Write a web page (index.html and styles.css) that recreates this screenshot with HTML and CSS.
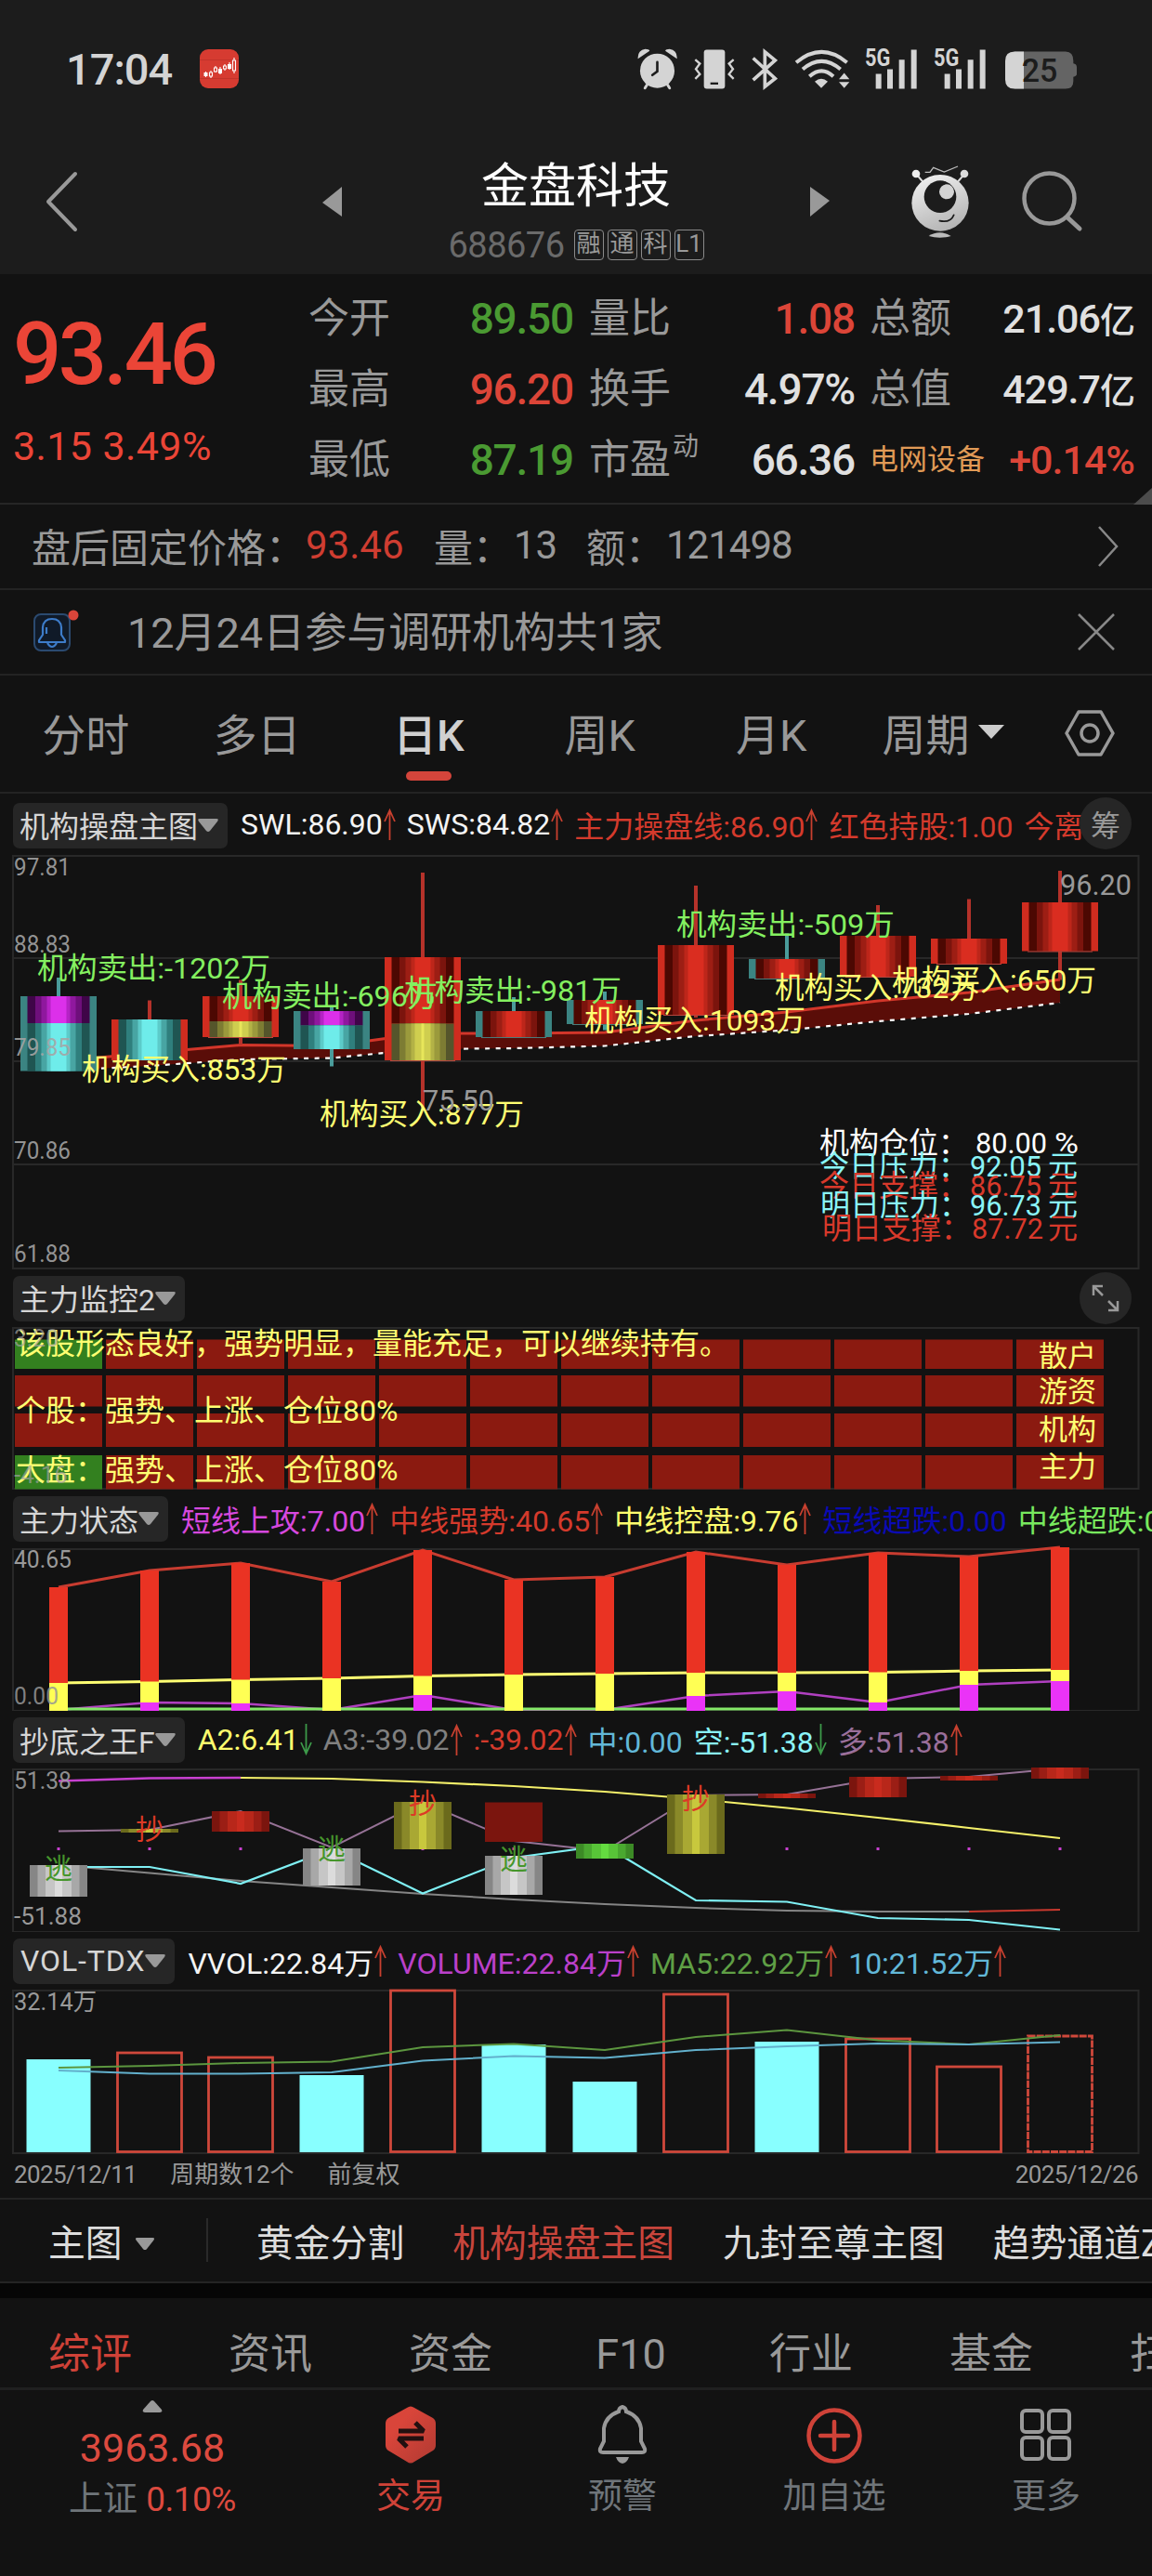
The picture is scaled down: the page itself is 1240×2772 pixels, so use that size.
FILE: index.html
```html
<!DOCTYPE html>
<html lang="zh-CN">
<head>
  <meta charset="UTF-8">
  <title>金盘科技 688676</title>
  <link rel="stylesheet" href="styles.css">
</head>
<body>
  <svg class="defs" width="0" height="0">
    <symbol id="up" viewBox="0 0 13 34"><path d="M6.5 34V2M1 14L6.5 2L12 14" fill="none" stroke="#c8402f" stroke-width="1.8"/></symbol>
    <symbol id="down" viewBox="0 0 13 34"><path d="M6.5 0V32M1 20L6.5 32L12 20" fill="none" stroke="#3d9a4a" stroke-width="1.8"/></symbol>
    <symbol id="caret" viewBox="0 0 22 15"><path d="M2 0H20Q23 0 21 3L13 13Q11 15 9 13L1 3Q-1 0 2 0Z" fill="#999"/></symbol>
  </svg>

  <header>
    <div class="status">
      <span class="clock">17:04</span>
      <svg class="app" width="42" height="42" viewBox="0 0 42 42">
        <rect width="42" height="42" rx="9" fill="#d63b31"/>
        <path d="M0 11.500H42M0 31.500H42" stroke="#b52f27" stroke-width=".6"/>
        <g fill="none" stroke="#fff" stroke-width="1.1">
          <path d="M6.500 24v6M12 23v8M17 18v7M22 19v8M27 16v7M32 14v8M37 9v17"/>
        </g>
        <g fill="#d63b31" stroke="#fff" stroke-width="1.1">
          <path d="M10.500 25h3v4h-3zM15.500 20h3v4h-3zM25.500 18h3v3h-3zM35.500 12h3v11h-3z"/>
        </g>
        <path d="M4.500 25h4v4h-4zM20 21h4v5h-4zM30 16h4v5h-4z" fill="#fff"/>
      </svg>
      <div class="icons">
        <svg width="43" height="45" viewBox="48 35 130 134">
          <circle cx="113" cy="107" r="56" fill="#d4d4d4"/>
          <path d="M50 68Q48 40 74 36Q86 36 88 42ZM177 68Q179 40 153 36Q141 36 139 42Z" fill="#d4d4d4"/>
          <path d="M80 152L73 163M146 152L153 163" stroke="#d4d4d4" stroke-width="9" stroke-linecap="round"/>
          <path d="M113 79V109L97 121" fill="none" stroke="#1c1c1c" stroke-width="8" stroke-linecap="round"/>
        </svg>
        <svg width="44" height="45" viewBox="239 35 132 134">
          <rect x="271" y="39" width="68" height="126" rx="9" fill="#d4d4d4"/>
          <path d="M292 148H317" stroke="#1c1c1c" stroke-width="7"/>
          <path d="M243 71L258 84L245 101L258 118L243 133M367 71L352 84L365 101L352 118L367 133" fill="none" stroke="#d4d4d4" stroke-width="7"/>
        </svg>
        <svg width="28" height="45" viewBox="426 35 84 134">
          <path d="M431 66L502 132L469 158V46L502 73L431 137" fill="none" stroke="#d4d4d4" stroke-width="11"/>
        </svg>
        <svg width="60" height="45" viewBox="565 35 180 134">
          <g fill="none" stroke="#d4d4d4" stroke-width="12">
            <path d="M571 80Q653 12 735 80M592 102Q653 50 714 102M614 125Q653 90 691 125"/>
          </g>
          <path d="M631 142Q652 124 673 142L652 163ZM709 134L726 114L743 134ZM709 143H743L726 163Z" fill="#d4d4d4"/>
        </svg>
        <svg class="sig" width="57" height="45" viewBox="793 35 171 134">
          <text x="793" y="91" textLength="82" lengthAdjust="spacingAndGlyphs">5G</text>
          <path d="M828 117h18v48h-18zM865 102h18v63h-18zM903 71h18v94h-18zM942 39h18v126h-18z" fill="#d4d4d4"/>
        </svg>
        <svg class="sig" width="57" height="45" viewBox="793 35 171 134">
          <text x="793" y="91" textLength="82" lengthAdjust="spacingAndGlyphs">5G</text>
          <path d="M828 117h18v48h-18zM865 102h18v63h-18zM903 71h18v94h-18zM942 39h18v126h-18z" fill="#d4d4d4"/>
        </svg>
        <svg class="bat" width="77" height="45" viewBox="1245 35 231 134">
          <path d="M1275 45H1440Q1465 45 1465 75V83Q1476 85 1476 95V118Q1476 124 1465 127V140Q1465 165 1440 165H1275Z" fill="#646464"/>
          <path d="M1305 45H1275Q1245 45 1245 75V135Q1245 165 1275 165H1305Z" fill="#d4d4d4"/>
          <text x="1298" y="141" textLength="116" lengthAdjust="spacingAndGlyphs">25</text>
        </svg>
      </div>
    </div>
    <div class="titlebar">
      <svg class="back" width="36" height="66" viewBox="0 0 36 66"><path d="M33 3L4 33L33 63" fill="none" stroke="#999" stroke-width="4" stroke-linecap="round" stroke-linejoin="round"/></svg>
      <svg class="prev" width="21" height="32" viewBox="0 0 21 32"><path d="M21 0V32L0 17Z" fill="#999"/></svg>
      <div class="name">
        <h1>金盘科技</h1>
        <p><span>688676</span><i>融</i><i>通</i><i>科</i><i>L1</i></p>
      </div>
      <svg class="next" width="21" height="32" viewBox="0 0 21 32"><path d="M0 0V32L21 15Z" fill="#999"/></svg>
      <svg class="robot" width="62" height="78" viewBox="937 412 186 234">
        <defs><linearGradient id="rb" x1=".2" y1="0" x2=".6" y2="1"><stop offset="0" stop-color="#f0f0f0"/><stop offset="1" stop-color="#b4b4b4"/></linearGradient></defs>
        <path d="M953 440L975 466M1108 440L1086 466" stroke="#ddd" stroke-width="6"/>
        <circle cx="952" cy="439" r="13" fill="#eee"/><circle cx="1108" cy="439" r="13" fill="#ddd"/>
        <path d="M981 434H997L1008 419L1043 433L1087 415" fill="none" stroke="#bbb" stroke-width="4"/>
        <ellipse cx="1030" cy="533" rx="92" ry="91" fill="url(#rb)"/>
        <circle cx="1030" cy="513" r="52" fill="#1c1c1c"/>
        <circle cx="1051" cy="497" r="24" fill="#d4d4d4"/>
        <path d="M1028 591Q1064 598 1074 572" fill="none" stroke="#1c1c1c" stroke-width="5" stroke-linecap="round"/>
        <path d="M993 640Q1028 618 1065 640Q1028 650 993 640Z" fill="#bbb"/>
      </svg>
      <svg class="search" width="66" height="66" viewBox="0 0 66 66"><circle cx="29.500" cy="29.500" r="27" fill="none" stroke="#999" stroke-width="4.500"/><path d="M49 50L62 62" stroke="#999" stroke-width="5" stroke-linecap="round"/></svg>
    </div>
  </header>

  <section class="quote">
    <div class="price">
      <b>93.46</b>
      <span>3.15 3.49%</span>
    </div>
    <dl class="c1">
      <dt>今开</dt><dd class="green">89.50</dd>
      <dt>最高</dt><dd class="red">96.20</dd>
      <dt>最低</dt><dd class="green">87.19</dd>
    </dl>
    <dl class="c2">
      <dt>量比</dt><dd class="red">1.08</dd>
      <dt>换手</dt><dd>4.97%</dd>
      <dt>市盈<sup>动</sup></dt><dd>66.36</dd>
    </dl>
    <dl class="c3">
      <dt>总额</dt><dd>21.06<em>亿</em></dd>
      <dt>总值</dt><dd>429.7<em>亿</em></dd>
      <dt class="sector">电网设备</dt><dd class="red">+0.14%</dd>
    </dl>
    <svg class="corner" width="20" height="18" viewBox="0 0 20 18"><path d="M20 0V18H0Z" fill="#4c4c4c"/></svg>
  </section>

  <section class="after">
    <span class="a1">盘后固定价格：</span><span class="a2">93.46</span>
    <span class="a3">量：</span><span class="a4">13</span>
    <span class="a5">额：</span><span class="a6">121498</span>
    <svg width="24" height="44" viewBox="0 0 24 44"><path d="M2 1L21 22L2 43" fill="none" stroke="#888" stroke-width="2.500"/></svg>
  </section>

  <section class="notice">
    <svg width="50" height="48" viewBox="0 0 50 48">
      <rect x="1" y="5" width="38" height="39" rx="7" fill="#101a28" stroke="#2b4a70" stroke-width="2"/>
      <path d="M10 27V19Q11 10 20 10Q29 10 30 19V27L34 33V35H6V33Z M15 36Q20 44 25 36M14 19V26" fill="none" stroke="#3d7cc9" stroke-width="2.200" stroke-linejoin="round"/>
      <circle cx="43" cy="6" r="5.500" fill="#d9453a"/>
    </svg>
    <span>12月24日参与调研机构共1家</span>
    <svg class="close" width="40" height="40" viewBox="0 0 40 40"><path d="M1 1L39 39M39 1L1 39" stroke="#888" stroke-width="2.500"/></svg>
  </section>

  <nav class="period">
    <a>分时</a><a>多日</a><a class="on">日K</a><a>周K</a><a>月K</a><a class="more">周期<svg width="28" height="15" viewBox="0 0 28 15"><path d="M0 0H28L14 15Z" fill="#ccc"/></svg></a>
    <svg class="hex" width="54" height="50" viewBox="0 0 54 50"><path d="M15 2H39L52 25L39 48H15L2 25Z" fill="none" stroke="#999" stroke-width="3.500" stroke-linejoin="round"/><circle cx="27" cy="25" r="9" fill="none" stroke="#999" stroke-width="3.500"/></svg>
  </nav>

  <section class="panel main">
    <div class="head">
      <div class="pill">机构操盘主图<svg><use href="#caret"/></svg></div>
      <div class="legend">
        <span class="white">SWL:86.90<svg><use href="#up"/></svg></span>
        <span class="white">SWS:84.82<svg><use href="#up"/></svg></span>
        <span class="lred">主力操盘线:86.90<svg><use href="#up"/></svg></span>
        <span class="lred">红色持股:1.00</span>
        <span class="lred">今离</span>
      </div>
      <div class="round">筹</div>
    </div>
    <svg id="kline" width="1240" height="446" viewBox="0 920 1240 446"></svg>
  </section>

  <section class="panel">
    <div class="head">
      <div class="pill">主力监控2<svg><use href="#caret"/></svg></div>
      <div class="round"><svg width="30" height="30" viewBox="0 0 30 30"><path d="M2 12V2H12M2 2L12 12M28 18V28H18M28 28L18 18" fill="none" stroke="#999" stroke-width="2.500"/></svg></div>
    </div>
    <svg id="monitor" width="1240" height="175" viewBox="0 1428 1240 175"></svg>
  </section>

  <section class="panel">
    <div class="head">
      <div class="pill">主力状态<svg><use href="#caret"/></svg></div>
      <div class="legend">
        <span class="magenta">短线上攻:7.00<svg><use href="#up"/></svg></span>
        <span class="lred">中线强势:40.65<svg><use href="#up"/></svg></span>
        <span class="yellow">中线控盘:9.76<svg><use href="#up"/></svg></span>
        <span class="blue">短线超跌:0.00</span>
        <span class="lime">中线超跌:0.00</span>
      </div>
    </div>
    <svg id="state" width="1240" height="175" viewBox="0 1666 1240 175"></svg>
  </section>

  <section class="panel">
    <div class="head">
      <div class="pill">抄底之王F<svg><use href="#caret"/></svg></div>
      <div class="legend">
        <span class="yellow">A2:6.41<svg><use href="#down"/></svg></span>
        <span class="gray">A3:-39.02<svg><use href="#up"/></svg></span>
        <span class="lred">:-39.02<svg><use href="#up"/></svg></span>
        <span class="sky">中:0.00</span>
        <span class="cyan">空:-51.38<svg><use href="#down"/></svg></span>
        <span class="mauve">多:51.38<svg><use href="#up"/></svg></span>
      </div>
    </div>
    <svg id="bottomking" width="1240" height="175" viewBox="0 1904 1240 175"></svg>
  </section>

  <section class="panel">
    <div class="head">
      <div class="pill latin">VOL-TDX<svg><use href="#caret"/></svg></div>
      <div class="legend">
        <span class="white">VVOL:22.84万<svg><use href="#up"/></svg></span>
        <span class="violet">VOLUME:22.84万<svg><use href="#up"/></svg></span>
        <span class="moss">MA5:22.92万<svg><use href="#up"/></svg></span>
        <span class="sky">10:21.52万<svg><use href="#up"/></svg></span>
      </div>
    </div>
    <svg id="volume" width="1240" height="175" viewBox="0 2142 1240 175"></svg>
    <div class="dates"><span class="day">2025/12/11</span><span>周期数12个</span><span>前复权</span><span class="day end">2025/12/26</span></div>
  </section>

  <nav class="charts">
    <a class="pick">主图<svg><use href="#caret"/></svg></a>
    <a>黄金分割</a><a class="on">机构操盘主图</a><a>九封至尊主图</a><a>趋势通道Z</a>
  </nav>

  <nav class="info">
    <a class="on">综评</a><a>资讯</a><a>资金</a><a>F10</a><a>行业</a><a>基金</a><a>扫雷</a>
  </nav>

  <footer>
    <div class="index">
      <svg width="22" height="13" viewBox="0 0 22 13"><path d="M9 1Q11 -1 13 1L21 10Q22 13 19 13H3Q0 13 1 10Z" fill="#999"/></svg>
      <b>3963.68</b>
      <p>上证 <span>0.10%</span></p>
    </div>
    <a class="on">
      <svg width="58" height="64" viewBox="0 0 58 64">
        <defs><linearGradient id="tr" x1="0" y1="0" x2="1" y2="1"><stop offset=".3" stop-color="#d9453a"/><stop offset="1" stop-color="#b03a32"/></linearGradient></defs>
        <path d="M25 3Q29 0 33 3L53 14Q56 16 56 20V43Q56 47 53 49L33 61Q29 64 25 61L5 49Q2 47 2 43V20Q2 16 5 14Z" fill="url(#tr)"/>
        <path d="M16 28H43L34 19M43 36H16L25 45" fill="none" stroke="#221010" stroke-width="5" stroke-linejoin="bevel"/>
      </svg>交易</a>
    <a>
      <svg width="58" height="64" viewBox="0 0 58 64">
        <path d="M29 2Q33 3 33 7Q47 12 49 25V39L53 47Q54 51 50 51H8Q4 51 5 47L9 39V25Q11 12 25 7Q25 3 29 2Z" fill="none" stroke="#999" stroke-width="4"/>
        <path d="M22 56H36Q34 62 29 63Q24 62 22 56Z" fill="#999"/>
      </svg>预警</a>
    <a>
      <svg class="plus" width="62" height="64" viewBox="0 0 62 64"><circle cx="31" cy="33" r="27.500" fill="none" stroke="#cf4238" stroke-width="4.500"/><path d="M31 18V48M16 33H46" stroke="#cf4238" stroke-width="4.500" stroke-linecap="round"/></svg>加自选</a>
    <a>
      <svg width="58" height="64" viewBox="0 0 58 64"><g fill="none" stroke="#999" stroke-width="4"><rect x="3" y="6" width="22" height="23" rx="4"/><rect x="32" y="6" width="22" height="23" rx="4"/><rect x="3" y="35" width="22" height="23" rx="4"/><rect x="32" y="35" width="22" height="23" rx="4"/></g></svg>更多</a>
  </footer>

  <script>
    const X = i => 63 + 98 * i;

    function el(svg, tag, attrs) {
      const e = document.createElementNS('http://www.w3.org/2000/svg', tag);
      for (const k in attrs) e.setAttribute(k, attrs[k]);
      svg.appendChild(e);
      return e;
    }
    function rect(svg, x1, y1, x2, y2, fill) {
      el(svg, 'rect', { x: x1, y: y1, width: x2 - x1, height: y2 - y1, fill });
    }
    function line(svg, ys, color, width, from = 0, extra = {}) {
      const points = ys.map((p, i) => Array.isArray(p) ? p.join() : X(from + i) + ',' + p).join(' ');
      el(svg, 'polyline', { points, fill: 'none', stroke: color, 'stroke-width': width, ...extra });
    }
    // cy is the middle of the glyphs, w squeezes the text to a width
    function text(svg, x, cy, str, size, color, w) {
      const a = { x, y: cy + size * 0.36, 'font-size': size, fill: color };
      if (w) { a.textLength = w; a.lengthAdjust = 'spacingAndGlyphs'; }
      el(svg, 'text', a).textContent = str;
    }
    // stepped shading, outermost colour first
    function shade(svg, cx, y1, y2, halves, colors) {
      halves.forEach((h, i) => rect(svg, cx - h, y1, cx + h, y2, colors[i]));
    }
    function frame(svg, top, bottom, rows = []) {
      el(svg, 'rect', { x: 14, y: top, width: 1211.5, height: bottom - top, fill: 'none', stroke: '#282828', 'stroke-width': 2 });
      rows.forEach(y => rect(svg, 14, y - 1, 1225, y + 1, '#282828'));
    }

    // ---- k line ----
    const k = document.getElementById('kline');
    frame(k, 921, 1365, [1031, 1142, 1253]);
    const upper = [[63, 1142], [161, 1133], [259, 1124.5], [357, 1125.5], [455, 1112], [553, 1112], [651, 1111], [749, 1098], [847, 1089], [945, 1077], [1043, 1068], [1141, 1054]];
    const lower = [[63, 1152], [161, 1147], [259, 1140], [357, 1138.5], [455, 1129], [553, 1128], [651, 1125.5], [749, 1115], [847, 1108.5], [945, 1099], [1043, 1091], [1141, 1079]];
    el(k, 'polygon', { points: upper.concat([...lower].reverse()).join(' '), fill: '#5a0d08' });
    line(k, upper, '#d2362a', 3);
    line(k, lower, '#fff', 2.2, 0, { 'stroke-dasharray': '5 6.500' });

    const R = ['#4c0802', '#7b140d', '#9d1e14', '#bd261a', '#da2d20'];
    const Y = ['#55552b', '#7d7c33', '#9b9a3c', '#b3b246', '#cfce4f'];
    const C = ['#1f5552', '#2f7f7d', '#48a5a3', '#5ccbc9', '#6eecea'];
    const M = ['#3f0548', '#6e0f7b', '#8f189e', '#b523c5', '#dc30ea'];
    // side colour, wick top, wick bottom, [fill, y1, y2]...
    const T = '#3b8482', D = '#d02c1f';
    const candles = [
      [T, 1052, 1152, [M, 1072, 1101], [C, 1101, 1152.5]],
      [D, 1076.5, 1146, [C, 1097, 1141]],
      [D, 1054.5, 1124, [R, 1072, 1099], [Y, 1099, 1116]],
      [T, 1082.5, 1147.5, [M, 1088, 1103.5], [C, 1103.5, 1129]],
      [D, 939, 1192, [R, 1030, 1101.5], [Y, 1101.5, 1141]],
      [T, 1073, 1116, [R, 1088, 1116]],
      [T, 1067, 1108.5, [R, 1076, 1102]],
      [D, 953, 1095, [R, 1017, 1092]],
      [T, 1004.5, 1054, [R, 1032, 1053]],
      [D, 974, 1051, [R, 1007, 1051]],
      [D, 967.5, 1038, [R, 1010, 1037]],
      [D, 937, 1054.5, [R, 971, 1023.5]]
    ];
    candles.forEach(([side, w1, w2, ...parts], i) => {
      const x = X(i), top = parts[0][1], bottom = parts[parts.length - 1][2];
      rect(k, x - 2, w1, x + 2, w2, side === T ? '#4a9c9b' : '#b5322a');
      rect(k, x - 41, top, x + 41, bottom, side);
      parts.forEach(([c, y1, y2]) => {
        shade(k, x, y1, y2, [33.5, 25, 18.5, 12.5, 8.5], c);
        if (c === Y) rect(k, x - 1.5, y1, x + 1.5, y2, '#e8e65a');
      });
      if (parts[parts.length - 1][0] !== C) rect(k, x - 35, bottom, x + 35, bottom + 1, side === T ? '#4a7c7b' : '#b5463e');
    });

    [['97.81', 933], ['88.83', 1016], ['79.85', 1127], ['70.86', 1238], ['61.88', 1349]]
      .forEach(([s, y]) => text(k, 15, y, s, 26, 'rgba(165,165,165,.9)', 61));
    const green = '#84f060', yel = '#ffff72';
    text(k, 40, 1041, '机构卖出:-1202万', 32, green, 251);
    text(k, 239, 1071.5, '机构卖出:-696万', 32, green, 232);
    text(k, 435, 1065, '机构卖出:-981万', 32, green, 234);
    text(k, 728, 994, '机构卖出:-509万', 32, green, 235);
    text(k, 88, 1150, '机构买入:853万', 32, yel, 220);
    text(k, 344, 1198, '机构买入:877万', 32, yel, 220);
    text(k, 629, 1097, '机构买入:1093万', 32, yel, 238);
    text(k, 834, 1062, '机构买入:732万', 32, yel, 219);
    text(k, 960, 1054.5, '机构买入:650万', 32, yel, 220);
    text(k, 455, 1183, '75.50', 32, '#999', 77);
    text(k, 1141, 951.5, '96.20', 32, '#999', 77);
    [['机构仓位', '80.00', '%', 1229.5, '#fff', 882, 1050],
     ['今日压力', '92.05', '元', 1254.5, '#8af4f8', 882, 1044],
     ['今日支撑', '86.75', '元', 1275, '#d8392b', 882, 1044],
     ['明日压力', '96.73', '元', 1296.5, '#8af4f8', 883, 1044],
     ['明日支撑', '87.72', '元', 1321.5, '#d8392b', 885, 1046]
    ].forEach(([label, v, unit, y, c, x1, x2]) => {
      text(k, x1, y, label + '：', 32, c);
      text(k, x2, y, v, 32, c, 77);
      text(k, unit === '%' ? 1135 : 1128, y, unit, 32, c, unit === '%' ? 26 : 32);
    });

    // ---- monitor ----
    const m = document.getElementById('monitor');
    frame(m, 1429, 1602);
    [[1441.5, 1473, true], [1480, 1513.5], [1521, 1557], [1566, 1602.5, true]].forEach(([y1, y2, g]) => {
      for (let i = 0; i < 12; i++) rect(m, X(i) - 47, y1, X(i) + 47, y2, g && i === 0 ? '#33801f' : '#8b1a10');
    });
    text(m, 17, 1445.5, '该股形态良好，强势明显，量能充足，可以继续持有。', 32, yel);
    text(m, 17, 1517, '个股：强势、上涨、仓位80%', 32, yel);
    text(m, 17, 1581, '大盘：强势、上涨、仓位80%', 32, yel);
    text(m, 15, 1440, '3.20', 26, 'rgba(160,160,160,.7)', 48);
    text(m, 15, 1587, '-4.16', 26, 'rgba(160,160,160,.7)', 58);
    [['散户', 1459], ['游资', 1497], ['机构', 1538], ['主力', 1578]].forEach(([s, y]) => text(m, 1118, y, s, 31, yel));

    // ---- state ----
    const s = document.getElementById('state');
    frame(s, 1667, 1841);
    const red = [1708, 1690, 1682, 1702, 1668, 1700, 1697, 1670, 1684, 1671, 1675, 1665];
    const mid = [1811, 1809.5, 1807.5, 1806, 1803.5, 1802, 1801, 1800, 1800, 1799.5, 1798, 1797];
    const mag = [1840, 1832, 1833, 1840, 1824, 1840, 1840, 1825, 1820, 1832, 1813, 1809];
    line(s, red, '#c83c30', 3);
    line(s, mid, '#ffff72', 3);
    line(s, mag, '#b040c0', 2.5);
    line(s, Array(12).fill(1839), '#84e868', 3);
    for (let i = 0; i < 12; i++) {
      rect(s, X(i) - 10, red[i], X(i) + 10, 1841, '#ea3323');
      rect(s, X(i) - 10, mid[i], X(i) + 10, 1841, '#ffff54');
      if (mag[i] < 1840) rect(s, X(i) - 10, mag[i], X(i) + 10, 1841, '#ea33f7');
    }
    text(s, 15, 1678, '40.65', 26, '#999', 62);
    text(s, 15, 1825, '0.00', 26, 'rgba(150,150,150,.85)', 48);

    // ---- bottom king ----
    const b = document.getElementById('bottomking');
    frame(b, 1904, 2079);
    line(b, [2007, 2015.5, 2024, 2031, 2038, 2044, 2049, 2053, 2056, 2057, 2057], '#858585', 2);
    line(b, [2057, 2055], '#c8392e', 2.2, 10);
    line(b, [1916.5, 1913.5, 1913], '#c840d0', 2.4);
    line(b, [1913, 1914, 1917.5, 1922, 1928, 1936, 1945.5, 1956, 1967, 1978], '#f4f06a', 2.2, 2);
    line(b, [1970.5, 1969, 1949, 1988, 1939, 1981, 1992, 1932, 1931, 1914, 1912, 1903], '#967296', 2);
    line(b, [2009, 2009, 2027, 1990, 2037.5, 1999, 1986, 2045, 2046.5, 2064, 2066, 2076.5], '#7ff0f4', 2.2);
    for (let i = 0; i < 12; i++) rect(b, X(i) - 1.5, 1988, X(i) + 1.5, 1991, '#c840d0');
    const W = ['#868686', '#a8a8a8', '#c6c6c6', '#dcdcdc'];
    const Y2 = ['#6b6a1c', '#8a8929', '#a9a833', '#c8c83d'];
    const R2 = ['#7b150e', '#9b1e15', '#b8271a', '#c92b1e'];
    const G2 = ['#3c8a26', '#4aa830', '#58c438', '#64dc40'];
    [[0, W, 2007, 2041], [1, Y2, 1968, 1972], [2, R2, 1949, 1971], [3, W, 1989, 2029], [4, Y2, 1939, 1990],
     [5, W, 1997, 2039], [6, G2, 1984, 2000], [7, Y2, 1931, 1995], [8, R2, 1930, 1935], [9, R2, 1912, 1934],
     [10, R2, 1911, 1916], [11, R2, 1902, 1914]
    ].forEach(([i, c, y1, y2]) => shade(b, X(i), y1, y2, [31, 22.5, 14, 4], c));
    rect(b, X(5) - 31, 1939.5, X(5) + 31, 1982, '#7b150e');
    [[1, 1968], [4, 1940], [7, 1935]].forEach(([i, y]) => text(b, X(i) - 15, y, '抄', 30, '#dc3a26'));
    [[0, 2010], [3, 1989.5], [5, 2000.5]].forEach(([i, y]) => text(b, X(i) - 15, y, '逃', 30, '#46962c'));
    text(b, 15, 1916, '51.38', 26, 'rgba(160,160,160,.9)', 62);
    text(b, 15, 2062, '-51.88', 26, '#999', 73);

    // ---- volume ----
    const v = document.getElementById('volume');
    frame(v, 2142, 2317);
    [2216, 2209, 2214, 2233, 2142, 2200, 2240, 2146, 2197, 2194, 2224, 2191].forEach((y, i) => {
      if ([0, 3, 5, 6, 8].includes(i)) rect(v, X(i) - 34.5, y, X(i) + 34.5, 2316, '#88ffff');
      else {
        const a = { x: X(i) - 34.5, y, width: 69, height: 2315.5 - y, fill: 'none', stroke: '#cf483b', 'stroke-width': 2.8 };
        if (i === 11) a['stroke-dasharray'] = '8 1.200';
        el(v, 'rect', a);
      }
    });
    line(v, [2225, 2223, 2220, 2218.5, 2203, 2199.5, 2206, 2192, 2184.5, 2195.5, 2200, 2190], '#5c963f', 2);
    line(v, [2228, 2231.5, 2231.5, 2230, 2217.5, 2212.5, 2214.5, 2206, 2202, 2199, 2200, 2197.5], '#62b0cc', 2);
    text(v, 15, 2154, '32.14万', 26, '#999', 89);
  </script>
</body>
</html>
```
FILE: styles.css
```css
* {
  box-sizing: border-box;
}
body {
  margin: 0;
  width: 1240px;
  height: 2772px;
  overflow: hidden;
  background-color: #121212;
  color: #999;
  font-family: Roboto, "Noto Sans CJK SC", sans-serif;
  font-size: 32px;
  font-weight: 400;
}
svg {
  display: block;
  flex: none;
}
h1, p, dl, dd, dt {
  margin: 0;
  font-weight: 400;
}
i, em {
  font-style: normal;
}
.defs {
  display: none;
}

/* top */
header {
  height: 295px;
  background-color: #1c1c1c;
}
.status {
  display: flex;
  align-items: center;
  height: 148px;
  padding-left: 71px;
}
.clock {
  width: 144px;
  color: #d4d4d4;
  font-size: 47px;
  font-weight: 500;
  letter-spacing: -1px;
}
.icons {
  display: flex;
  align-items: center;
  margin-left: 429px;
}
.icons svg {
  margin-right: 18px;
}
.icons svg.sig {
  margin: 0 17px 0 -2px;
}
.icons svg.sig + svg.sig {
  margin: 0 20px 0 0;
}
.sig text {
  fill: #d4d4d4;
  font-size: 76px;
  font-weight: 700;
}
.bat text {
  fill: #1c1c1c;
  font-size: 106px;
  font-weight: 500;
}
.titlebar {
  display: flex;
  align-items: center;
  height: 138px;
  padding-left: 48px;
}
.prev {
  margin-left: 263px;
}
.name {
  width: 504px;
  text-align: center;
  padding-top: 24px;
}
.name h1 {
  color: #fff;
  font-size: 51px;
  line-height: 60px;
}
.name p {
  display: flex;
  justify-content: center;
  align-items: center;
  gap: 4px;
  margin-top: 9px;
  line-height: 48px;
}
.name p span {
  color: #6a6a6a;
  font-size: 38px;
  letter-spacing: -0.5px;
  margin-right: 6px;
}
.name i {
  width: 32px;
  height: 33px;
  border: 1.5px solid #8a8a8a;
  border-radius: 4px;
  font-size: 26px;
  line-height: 29px;
}
.robot {
  margin-left: 88px;
}
.search {
  margin-left: 57px;
}

/* quote */
.quote {
  position: relative;
  display: flex;
  height: 248px;
  border-bottom: 2px solid #262626;
}
.quote .green {
  color: #4a9a32;
}
.quote .red {
  color: #dc4538;
}
.price {
  width: 332px;
  padding-left: 14px;
  color: #eb4537;
}
.price b {
  display: block;
  margin-top: 32px;
  font-size: 92px;
  font-weight: 500;
  line-height: 110px;
  letter-spacing: -3.5px;
}
.price span {
  display: block;
  margin-top: 19px;
  font-size: 43px;
  line-height: 48px;
  letter-spacing: 0.4px;
}
dl {
  display: grid;
  grid-template-columns: auto 1fr;
  grid-auto-rows: 76px;
  line-height: 76px;
  padding-top: 10px;
}
dt {
  font-size: 44px;
}
dd {
  color: #e0e0e0;
  font-size: 46px;
  font-weight: 500;
  letter-spacing: -1.2px;
  text-align: right;
}
.c1 {
  width: 285px;
}
.c2 {
  width: 286px;
  margin-left: 17px;
}
.c3 {
  width: 285px;
  margin-left: 16px;
}
.c3 dd {
  font-size: 43px;
  letter-spacing: -1px;
  grid-column: 2;
}
.c3 dt {
  grid-column: 1;
  width: 130px;
}
.c3 em {
  font-size: 38px;
}
sup {
  display: inline-block;
  font-size: 28px;
  line-height: 28px;
  vertical-align: 20px;
  margin-left: 2px;
}
.c3 .sector {
  color: #e09a56;
  font-size: 31px;
  white-space: nowrap;
}
.corner {
  position: absolute;
  right: 0;
  bottom: -2px;
}

/* after-hours line and notice */
.after, .notice {
  display: flex;
  align-items: center;
  height: 92px;
  border-bottom: 2px solid #232323;
}
.after {
  padding: 0 35px 0 34px;
  font-size: 42px;
}
.after span {
  flex: none;
  white-space: nowrap;
  margin-top: -3px;
}
.a1 {
  width: 295px;
}
.a2 {
  width: 138px;
  color: #cf3d31;
}
.a3, .a5 {
  width: 86px;
}
.a4 {
  width: 78px;
}
.after .a6 {
  letter-spacing: -1px;
}
.after svg {
  margin-left: auto;
}
.notice {
  padding: 0 40px 0 36px;
  font-size: 45px;
}
.notice span {
  margin: -5px 0 0 51px;
}
.close {
  margin-left: auto;
}

/* period tabs */
.period {
  display: flex;
  align-items: center;
  height: 127px;
  padding-bottom: 2px;
  border-bottom: 2px solid #232323;
  font-size: 47px;
}
.period a {
  position: relative;
  width: 184.5px;
  margin-top: -2px;
  text-align: center;
}
.period .on {
  color: #d0d0d0;
  font-weight: 500;
}
.period .on::after {
  content: "";
  position: absolute;
  left: 68px;
  bottom: -18px;
  width: 49px;
  height: 10px;
  border-radius: 5px;
  background-color: #d4453b;
}
.period .more {
  display: flex;
  align-items: center;
  gap: 9px;
  width: 223.5px;
  padding-left: 27px;
}

/* indicator panels */
.panel {
  overflow: hidden;
}
.panel > svg {
  overflow: visible;
}
.head {
  display: flex;
  align-items: center;
  height: 63px;
  padding-left: 14px;
  position: relative;
}
.main .head {
  height: 66px;
  margin-top: 1px;
  margin-bottom: -1px;
}
.main + .panel .head {
  height: 62px;
}
.pill {
  display: flex;
  align-items: center;
  flex: none;
  height: 49px;
  padding: 0 10px 2px 7px;
  border-radius: 7px;
  background-color: #262626;
  color: #d6d6d6;
}
.pill svg {
  width: 22px;
  height: 15px;
  margin: 2px 0 0;
}
.pill.latin {
  padding-left: 8px;
  letter-spacing: 0.9px;
}
.legend {
  display: flex;
  gap: 12px;
  margin: -2px 0 0 14px;
  white-space: nowrap;
}
.legend span {
  display: flex;
  align-items: center;
}
.legend svg {
  width: 13px;
  height: 34px;
  margin-left: 1px;
}
.round {
  position: absolute;
  right: 22px;
  top: 3px;
  display: flex;
  align-items: center;
  justify-content: center;
  width: 56px;
  height: 56px;
  border-radius: 50%;
  background-color: #262626;
}
.white { color: #f4f4f4; }
.lred { color: #d43a2c; }
.magenta { color: #d648de; }
.yellow { color: #ffff6e; }
.blue { color: #0a0ab4; }
.lime { color: #78e85e; }
.gray { color: #808080; }
.sky { color: #62b8d8; }
.cyan { color: #8af4f8; }
.mauve { color: #9a6f9a; }
.violet { color: #bb40ca; }
.moss { color: #5f9f45; }
.dates {
  display: flex;
  height: 48px;
  padding: 0 15px;
  font-size: 26px;
  line-height: 46px;
}
.dates span {
  margin-right: 36px;
}
.dates .day {
  letter-spacing: -0.6px;
}
.dates .end {
  margin: 0 0 0 auto;
}

/* chart picker */
.charts {
  display: flex;
  align-items: center;
  gap: 52px;
  height: 92px;
  padding-bottom: 1px;
  border-top: 2px solid #242424;
  border-bottom: 2px solid #242424;
  color: #dcdcdc;
  font-size: 39.8px;
  white-space: nowrap;
  overflow: hidden;
}
.charts .on {
  color: #c8453c;
}
.charts .pick {
  display: flex;
  align-items: center;
  flex: none;
  width: 224px;
  height: 47px;
  padding-left: 52px;
  border-right: 2px solid #2a2a2a;
}
.pick svg {
  width: 24px;
  height: 14px;
  margin: 8px 0 0 12px;
}
.info {
  display: flex;
  height: 115px;
  border-top: 16px solid #060606;
  border-bottom: 3px solid #1f1f1f;
  font-size: 45px;
  line-height: 122px;
  overflow: hidden;
}
.info a {
  flex: none;
  width: 194px;
  text-align: center;
}
.info .on {
  color: #cf4238;
}

/* bottom bar */
footer {
  display: flex;
  font-size: 37px;
  color: #6f757a;
}
.index {
  width: 328px;
  padding-top: 11px;
  text-align: center;
}
.index svg {
  margin: 0 auto;
}
.index b {
  display: block;
  margin-top: 12px;
  color: #dc4a3f;
  font-size: 43px;
  font-weight: 400;
  line-height: 52px;
}
.index p {
  margin-top: 6px;
  line-height: 48px;
  font-size: 37px;
}
.index span {
  color: #dc4a3f;
  letter-spacing: -0.5px;
}
footer a {
  width: 228px;
  padding-top: 16px;
  text-align: center;
  line-height: 68px;
}
footer a svg {
  margin: 0 auto 1px;
}
footer .on {
  color: #cf4238;
}
```
